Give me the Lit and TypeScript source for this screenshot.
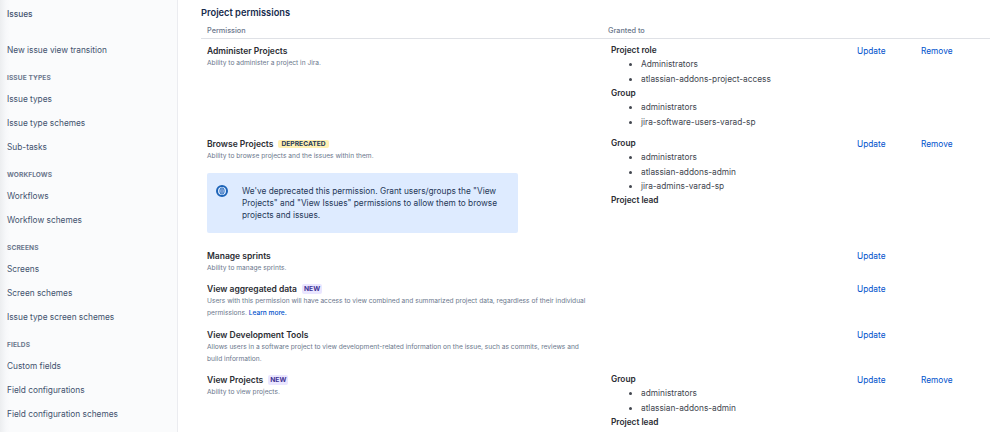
import { LitElement, html, css, nothing } from "lit";
import { customElement } from "lit/decorators.js";

interface NavGroup {
  heading: string;
  items: string[];
}

interface GrantGroup {
  label: string;
  members: string[];
}

interface Permission {
  title: string;
  badge?: "deprecated" | "new";
  desc: unknown;
  callout?: boolean;
  grants: GrantGroup[];
  removable?: boolean;
}

const NAV: NavGroup[] = [
  { heading: "Issue types", items: ["Issue types", "Issue type schemes", "Sub-tasks"] },
  { heading: "Workflows", items: ["Workflows", "Workflow schemes"] },
  { heading: "Screens", items: ["Screens", "Screen schemes", "Issue type screen schemes"] },
  { heading: "Fields", items: ["Custom fields", "Field configurations", "Field configuration schemes"] },
];

const PERMISSIONS: Permission[] = [
  {
    title: "Administer Projects",
    desc: "Ability to administer a project in Jira.",
    removable: true,
    grants: [
      { label: "Project role", members: ["Administrators", "atlassian-addons-project-access"] },
      { label: "Group", members: ["administrators", "jira-software-users-varad-sp"] },
    ],
  },
  {
    title: "Browse Projects",
    badge: "deprecated",
    desc: "Ability to browse projects and the issues within them.",
    callout: true,
    removable: true,
    grants: [
      { label: "Group", members: ["administrators", "atlassian-addons-admin", "jira-admins-varad-sp"] },
      { label: "Project lead", members: [] },
    ],
  },
  { title: "Manage sprints", desc: "Ability to manage sprints.", grants: [] },
  {
    title: "View aggregated data",
    badge: "new",
    desc: html`Users with this permission will have access to view combined and summarized project data, regardless of their individual<br />permissions. <a class="learn">Learn more.</a>`,
    grants: [],
  },
  {
    title: "View Development Tools",
    desc: "Allows users in a software project to view development-related information on the issue, such as commits, reviews and build information.",
    grants: [],
  },
  {
    title: "View Projects",
    badge: "new",
    desc: "Ability to view projects.",
    removable: true,
    grants: [
      { label: "Group", members: ["administrators", "atlassian-addons-admin"] },
      { label: "Project lead", members: [] },
    ],
  },
];

@customElement("app-root")
export class AppRoot extends LitElement {
  static styles = css`
    :host {
      display: flex;
      width: 999px;
      height: 432px;
      overflow: hidden;
      background: #fff;
      font-family: Inter, "Liberation Sans", sans-serif;
      font-size: 8.3px;
      color: #172b4d;
    }

    /* sidebar */
    .sidebar {
      flex: 0 0 178px;
      box-sizing: border-box;
      height: 432px;
      padding: 6.5px 0 0 7px;
      background: linear-gradient(90deg, #eceef0 0, #f7f8fa 6px, #fafbfc 10px);
      border-right: 1px solid #ebecf0;
      color: #42526e;
    }
    .nav-title {
      height: 14px;
      line-height: 14px;
      font-weight: 500;
      margin-bottom: 22px;
    }
    .nav-item {
      height: 24px;
      line-height: 14px;
    }
    .nav-head {
      margin-top: 5px;
      height: 20px;
      line-height: 12px;
      font-size: 6.6px;
      font-weight: 700;
      letter-spacing: 0.1px;
      color: #6b778c;
      text-transform: uppercase;
    }

    /* main */
    .main {
      flex: 1;
      min-width: 0;
      padding: 6px 9px 0 23px;
    }
    h1 {
      margin: 0;
      height: 13px;
      line-height: 13px;
      font-size: 9.3px;
      font-weight: 600;
    }
    .head,
    .row {
      display: grid;
      grid-template-columns: 401px 249px 64px 1fr;
    }
    .head {
      margin-top: 4px;
      height: 15px;
      padding-left: 6px;
      line-height: 16px;
      font-size: 7.3px;
      font-weight: 500;
      color: #6b778c;
      border-bottom: 1.5px solid #dfe1e6;
    }
    .row {
      padding: 6px 0 3.4px 6px;
    }
    .title {
      display: flex;
      align-items: center;
      gap: 5px;
      height: 12px;
      font-size: 8.5px;
      font-weight: 600;
      color: #2b2d33;
    }
    .desc {
      max-width: 385px;
      font-size: 6.64px;
      line-height: 12px;
      color: #6b778c;
    }
    .learn {
      color: #0052cc;
      font-weight: 500;
    }
    .badge {
      padding: 0 3px;
      height: 8px;
      line-height: 8px;
      font-size: 6.7px;
      font-weight: 700;
      border-radius: 2px;
    }
    .badge.deprecated {
      background: #fff0b3;
      color: #253858;
    }
    .badge.new {
      background: #eae6ff;
      color: #403294;
      padding: 1px 2px;
    }
    .callout {
      display: flex;
      box-sizing: border-box;
      width: 311px;
      height: 60px;
      margin: 10.7px 0 7.7px;
      padding: 12px 14px 0 9px;
      gap: 14px;
      background: #deebff;
      border-radius: 2px;
      font-size: 8.3px;
      line-height: 12px;
      color: #253858;
    }
    .callout svg {
      flex: none;
    }
    .grants {
      margin: -2px 0 -0.4px;
      padding-left: 3px;
      line-height: 14.35px;
    }
    .grants b {
      display: block;
      font-weight: 600;
      color: #2b2d33;
    }
    ul {
      margin: 0;
      padding: 0 0 0 30px;
      color: #42464f;
    }
    .action {
      line-height: 14px;
      margin-top: -1px;
      color: #0052cc;
    }
  `;

  private renderRow(p: Permission) {
    return html`
      <div class="row">
        <div>
          <div class="title">
            ${p.title}
            ${p.badge
              ? html`<span class="badge ${p.badge}">${p.badge.toUpperCase()}</span>`
              : nothing}
          </div>
          <div class="desc">${p.desc}</div>
          ${p.callout
            ? html`
                <div class="callout">
                  <svg width="12" height="12" viewBox="0 0 12 12">
                    <circle cx="6" cy="6" r="5" fill="#deebff" stroke="#1c63b7" stroke-width="2" />
                    <rect x="4" y="3" width="4" height="6" rx="2" fill="none" stroke="#1c63b7" />
                    <rect x="5.5" y="4" width="1" height="4" fill="#0747a6" />
                  </svg>
                  <div>
                    We've deprecated this permission. Grant users/groups the "View
                    Projects" and "View Issues" permissions to allow them to browse
                    projects and issues.
                  </div>
                </div>
              `
            : nothing}
        </div>
        <div class="grants">
          ${p.grants.map(
            (g) => html`
              <b>${g.label}</b>
              ${g.members.length
                ? html`<ul>${g.members.map((m) => html`<li>${m}</li>`)}</ul>`
                : nothing}
            `,
          )}
        </div>
        <div class="action">Update</div>
        <div class="action">${p.removable ? "Remove" : ""}</div>
      </div>
    `;
  }

  render() {
    return html`
      <aside class="sidebar">
        <div class="nav-title">Issues</div>
        <div class="nav-item">New issue view transition</div>
        ${NAV.map(
          (g) => html`
            <div class="nav-head">${g.heading}</div>
            ${g.items.map((i) => html`<div class="nav-item">${i}</div>`)}
          `,
        )}
      </aside>
      <main class="main">
        <h1>Project permissions</h1>
        <div class="head">
          <span>Permission</span>
          <span>Granted to</span>
        </div>
        ${PERMISSIONS.map((p) => this.renderRow(p))}
      </main>
    `;
  }
}
